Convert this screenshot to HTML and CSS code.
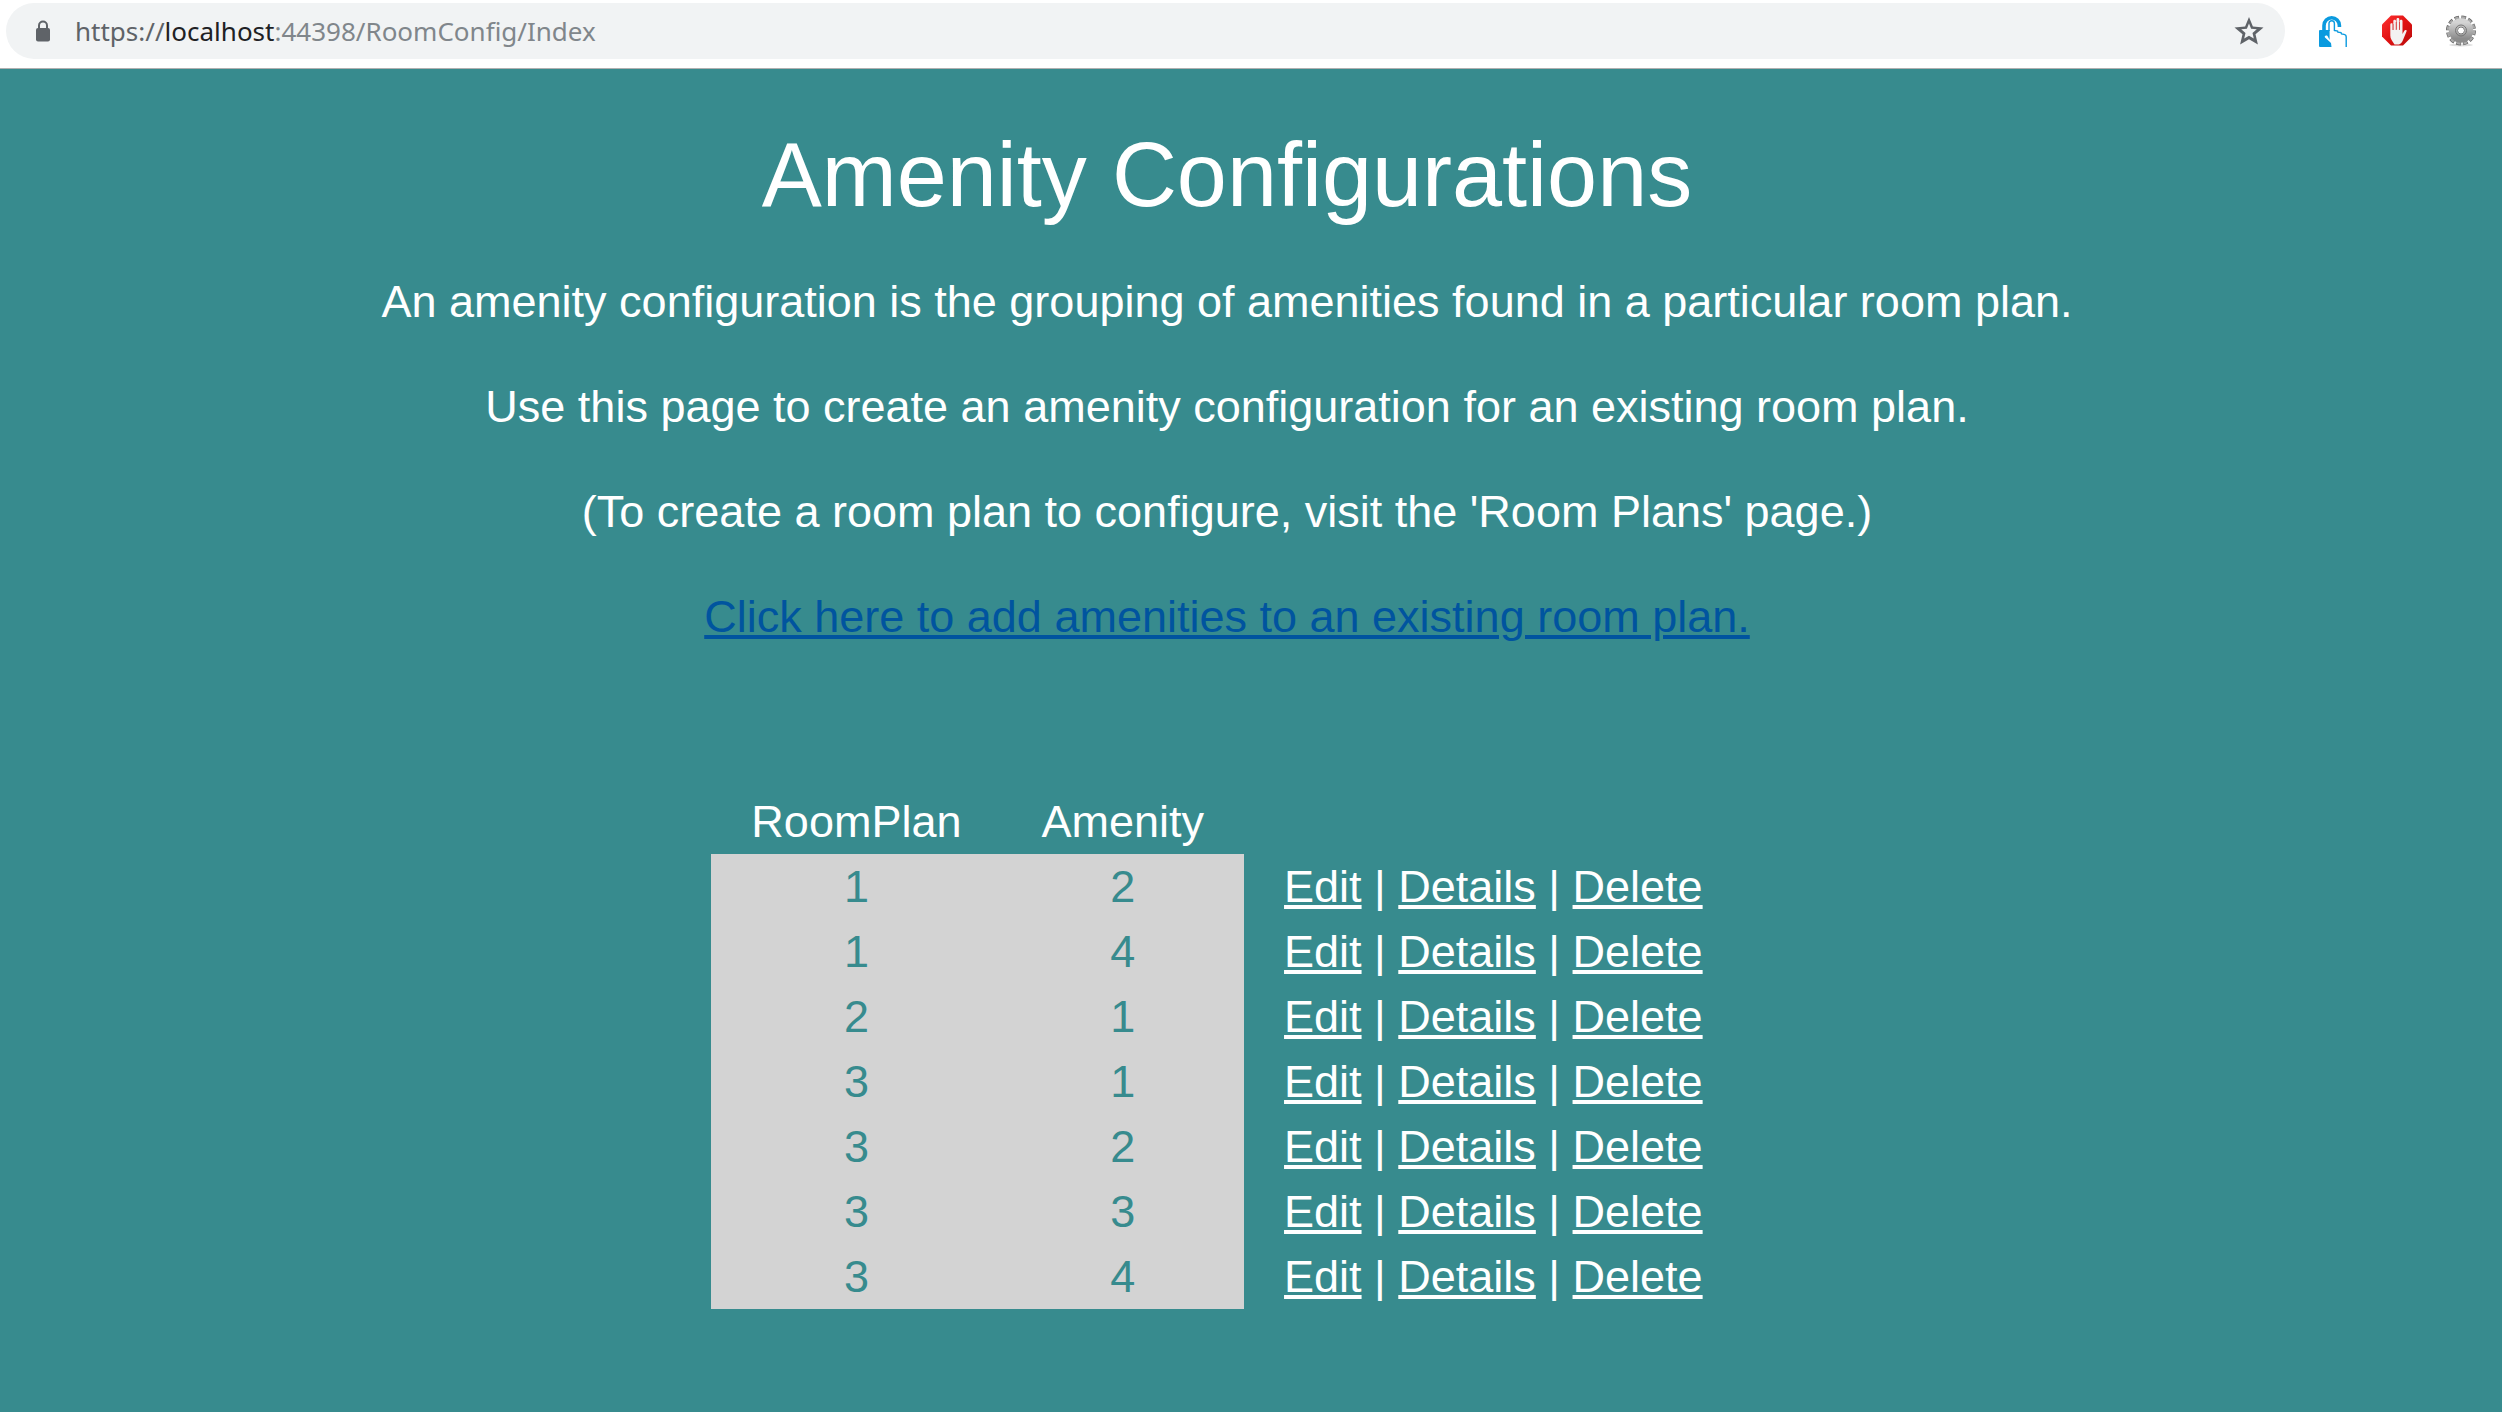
FILE: index.html
```html
<!DOCTYPE html>
<html lang="en">
<head>
<meta charset="utf-8">
<title>Amenity Configurations</title>
<link rel="stylesheet" href="styles.css">
</head>
<body>
<header class="toolbar">
  <div class="omnibox">
    <svg class="lock" viewBox="0 0 16 22" aria-hidden="true"><path d="M4 9V5.500a4 4 0 0 1 8 0V9" fill="none" stroke="#5f6368" stroke-width="2"/><rect x="1" y="8" width="14" height="13.500" rx="2" fill="#5f6368"/></svg>
    <div class="url"><span class="scheme">https://</span><span class="host">localhost</span>:44398/RoomConfig/Index</div>
    <button class="icon-button" aria-label="Bookmark this page"><svg class="star" viewBox="0 0 30 30"><path d="M15 1l3.900 9.500 10.600.9-8 6.900 2.400 10.300L15 23.200l-8.900 5.400 2.400-10.300-8-6.900 10.600-.9zM15 7.600l-2.100 5.200-5.700.5 4.300 3.700-1.300 5.600 4.800-2.900 4.800 2.900-1.300-5.600 4.300-3.700-5.700-.5z" fill="#5f6368" fill-rule="evenodd"/></svg></button>
  </div>
  <div class="extensions">
    <button class="icon-button" aria-label="Unlock">
      <svg class="ext" viewBox="0 0 32 32">
        <path d="M7 16V10.500a7.700 7.700 0 0 1 15.400 0V12" fill="none" stroke="#0a9adf" stroke-width="3.600"/>
        <path d="M3 15h15v17H3a1 1 0 0 1-1-1V16a1 1 0 0 1 1-1z" fill="#0a9adf"/>
        <path d="M12.600 25V8.500a2.200 2.200 0 0 1 4.400 0V16l11 2v14H14.500l-.5-4-6-5.500c-1-1.500 1-2.500 2.500-1.500z" fill="#fff"/>
        <path d="M12 16V8.500a2.700 2.700 0 0 1 5.400 0V15.500l3.200.5.300 1.200 3.100.4.500 1.300 2.500.5c1.500.3 2.200 1 2.200 2.500V32" fill="none" stroke="#0a9adf" stroke-width="1.400"/>
      </svg>
    </button>
    <button class="icon-button" aria-label="Ad blocker">
      <svg class="ext" viewBox="0 0 32 32">
        <defs><linearGradient id="stop" x1="0" y1="0" x2="1" y2="1"><stop offset="0" stop-color="#f33"/><stop offset=".5" stop-color="#e01212"/><stop offset="1" stop-color="#b80c0c"/></linearGradient></defs>
        <path d="M10 .500h12l9 9v12l-9 9H10l-9-9v-12z" fill="url(#stop)"/>
        <path d="M13.500 29.500c-1.800-2.800-4.500-6.200-4.200-9V9.500c0-1.800 2.500-1.800 2.500 0V15h.5V6c0-1.800 2.700-1.800 2.700 0v8.500h.5V4.500c0-1.900 2.800-1.900 2.800 0v10h.5V6c0-1.800 2.700-1.800 2.700 0v13l1.500-2.800c.8-1.600 3.200-1.500 2.500.3l-3.500 8.500c-.8 2-2 3.500-4 4.500z" fill="#f3f1f1"/>
        <path d="M12 9v6M15.200 7v8M18.500 7v8" stroke="#c33" stroke-width=".7"/>
      </svg>
    </button>
    <button class="icon-button" aria-label="Settings">
      <svg class="ext" viewBox="0 0 32 32">
        <defs><linearGradient id="metal" x1="0" y1="0" x2="0" y2="1"><stop offset="0" stop-color="#d4d4d4"/><stop offset="1" stop-color="#8c8c8c"/></linearGradient></defs>
        <ellipse cx="16" cy="30" rx="12" ry="1.500" fill="#ddd"/>
        <circle cx="16" cy="15.500" r="13" fill="none" stroke="#666" stroke-width="4" stroke-dasharray="4.500 2.307"/>
        <circle cx="16" cy="15.500" r="13" fill="none" stroke="#aaa" stroke-width="2.600" stroke-dasharray="3.500 3.307" stroke-dashoffset="-.5"/>
        <circle cx="16" cy="15.500" r="8" fill="none" stroke="url(#metal)" stroke-width="8.500"/>
        <circle cx="16" cy="15.500" r="5.500" fill="none" stroke="#777" stroke-width="1"/>
        <circle cx="16" cy="15.500" r="3.500" fill="#fff" stroke="#777"/>
      </svg>
    </button>
  </div>
</header>
<main class="page">
  <h1 class="title">Amenity Configurations</h1>
  <p class="text">An amenity configuration is the grouping of amenities found in a particular room plan.</p>
  <p class="text">Use this page to create an amenity configuration for an existing room plan.</p>
  <p class="text">(To create a room plan to configure, visit the 'Room Plans' page.)</p>
  <p class="text"><a class="create" href="#">Click here to add amenities to an existing room plan.</a></p>
  <table class="configs">
    <thead><tr><th scope="col">RoomPlan</th><th scope="col">Amenity</th><td></td></tr></thead>
    <tbody>
      <tr><td class="value">1</td><td class="value">2</td><td><a href="#">Edit</a> | <a href="#">Details</a> | <a href="#">Delete</a></td></tr>
      <tr><td class="value">1</td><td class="value">4</td><td><a href="#">Edit</a> | <a href="#">Details</a> | <a href="#">Delete</a></td></tr>
      <tr><td class="value">2</td><td class="value">1</td><td><a href="#">Edit</a> | <a href="#">Details</a> | <a href="#">Delete</a></td></tr>
      <tr><td class="value">3</td><td class="value">1</td><td><a href="#">Edit</a> | <a href="#">Details</a> | <a href="#">Delete</a></td></tr>
      <tr><td class="value">3</td><td class="value">2</td><td><a href="#">Edit</a> | <a href="#">Details</a> | <a href="#">Delete</a></td></tr>
      <tr><td class="value">3</td><td class="value">3</td><td><a href="#">Edit</a> | <a href="#">Details</a> | <a href="#">Delete</a></td></tr>
      <tr><td class="value">3</td><td class="value">4</td><td><a href="#">Edit</a> | <a href="#">Details</a> | <a href="#">Delete</a></td></tr>
    </tbody>
  </table>
</main>
</body>
</html>
```

FILE: styles.css
```css
* { box-sizing: border-box; }

body {
  margin: 0;
  min-height: 100vh;
  background: #378b8e;
  color: #fff;
  font-family: "Liberation Sans", Arial, sans-serif;
  font-size: 45px;
  line-height: 65px;
}

a {
  text-decoration-thickness: 4px;
  text-underline-offset: 3px;
}

.toolbar {
  display: flex;
  align-items: center;
  height: 69px;
  padding: 0 25px 6px 6px;
  background: #fff;
  border-bottom: 1px solid #b0b0b0;
}

.omnibox {
  display: flex;
  flex: 1;
  align-items: center;
  height: 56px;
  padding: 0 21px 0 29px;
  border-radius: 28px;
  background: #f1f3f4;
}

.lock { width: 16px; height: 22px; }

.url {
  flex: 1;
  margin-left: 24px;
  color: #80868b;
  font-family: "Noto Sans", "Open Sans", sans-serif;
  font-size: 26px;
  line-height: 40px;
}

.scheme { color: #5f6368; }
.host { color: #202124; }

.icon-button {
  display: block;
  padding: 0;
  border: 0;
  background: none;
}

.icon-button svg { display: block; }
.star { width: 30px; height: 30px; }
.ext { width: 32px; height: 32px; }

.extensions {
  display: flex;
  gap: 32px;
  margin-left: 32px;
}

.page {
  padding: 52px 48px 0 0;
  text-align: center;
}

.title {
  margin: 0 0 40px;
  font-size: 90px;
  font-weight: 400;
  line-height: 108px;
}

.text { margin: 0 0 40px; }
.create { color: #00549f; }

.configs {
  margin: 140px auto 0;
  border-collapse: collapse;
}

.configs th,
.configs td {
  padding: 0 40px;
  font-weight: 400;
}

.configs .value {
  background: #d3d3d3;
  color: #378b8e;
}

.configs a { color: inherit; }
```
